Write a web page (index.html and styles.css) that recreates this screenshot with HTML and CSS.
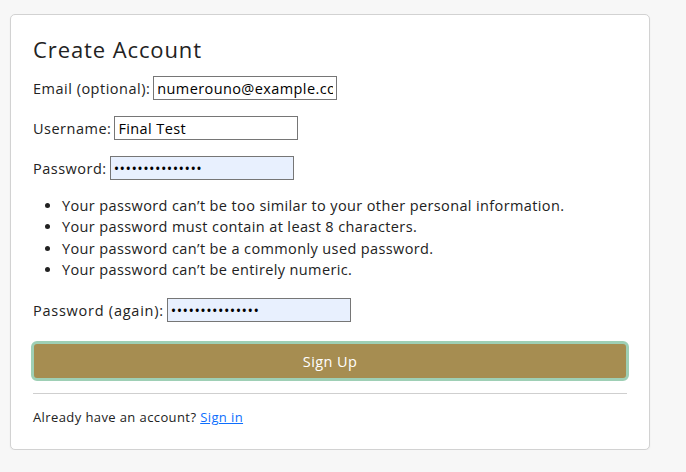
FILE: index.html
```html
<!DOCTYPE html>
<html>
<head>
<meta charset="utf-8">
<link rel="stylesheet" href="styles.css">
</head>
<body>
<div class="card">
  <h2 class="title">Create Account</h2>
  <form class="form">
    <div class="row"><label>Email (optional):</label><input class="field" type="text" value="numerouno@example.com"></div>
    <div class="row"><label>Username:</label><input class="field" type="text" value="Final Test"></div>
    <div class="row"><label>Password:</label><input class="field auto" type="password" value="finaltest123456"></div>
    <ul class="help">
      <li>Your password can’t be too similar to your other personal information.</li>
      <li>Your password must contain at least 8 characters.</li>
      <li>Your password can’t be a commonly used password.</li>
      <li>Your password can’t be entirely numeric.</li>
    </ul>
    <div class="row"><label class="wide">Password (again):</label><input class="field auto" type="password" value="finaltest123456"></div>
    <button class="btn" type="button">Sign Up</button>
  </form>
  <hr class="sep">
  <p class="foot">Already have an account? <a href="#">Sign in</a></p>
</div>
</body>
</html>
```
FILE: styles.css
```css
html, body {
  margin: 0;
  padding: 0;
  background: #f7f7f7;
}
body {
  padding: 14px 37px 0 10px;
  font-family: "Open Sans", "Liberation Sans", sans-serif;
  color: #222;
}
.card {
  background: #fff;
  border: 1px solid #d2d2d2;
  border-radius: 5px;
  box-shadow: 0 1px 2px rgba(0,0,0,0.06);
  padding: 18px 22px 23px 22px;
  width: 594px;
}
.title {
  margin: 0 0 11px 0;
  font-size: 22px;
  font-weight: 400;
  line-height: 32px;
  letter-spacing: 0.9px;
}
.form {
  display: flex;
  flex-direction: column;
}
.row {
  display: flex;
  align-items: center;
  height: 24px;
  margin-bottom: 16px;
  font-size: 14.5px;
  letter-spacing: 0.5px;
}
.row label {
  margin-right: 3px;
}
.row label.wide {
  letter-spacing: 0.75px;
}
.field {
  width: 184px;
  height: 24px;
  box-sizing: border-box;
  border: 1px solid #767676;
  padding: 1px 3px;
  font-family: "Open Sans", "Liberation Sans", sans-serif;
  font-size: 14.5px;
  letter-spacing: 0.4px;
  color: #000;
  background: #fff;
}
.field.auto {
  background: #e8f0fe;
  letter-spacing: 0.45px;
}
.help {
  margin: -1px 0 18px 0;
  padding-left: 29px;
  font-size: 14.5px;
  line-height: 21.3px;
  letter-spacing: 0.38px;
}
.btn {
  margin: 3px -2px 0 -2px;
  height: 40px;
  box-sizing: border-box;
  background: #a68d51;
  border: 3px solid #9ecfb5;
  border-radius: 6px;
  color: #fff;
  font-family: "Open Sans", "Liberation Sans", sans-serif;
  font-size: 14.5px;
  letter-spacing: 0.4px;
}
.sep {
  border: 0;
  border-top: 1px solid #cfcfcf;
  margin: 12px 0 0 0;
}
.foot {
  margin: 14px 0 0 0;
  font-size: 13px;
  letter-spacing: 0.4px;
}
.foot a {
  color: #0d6efd;
}
```
